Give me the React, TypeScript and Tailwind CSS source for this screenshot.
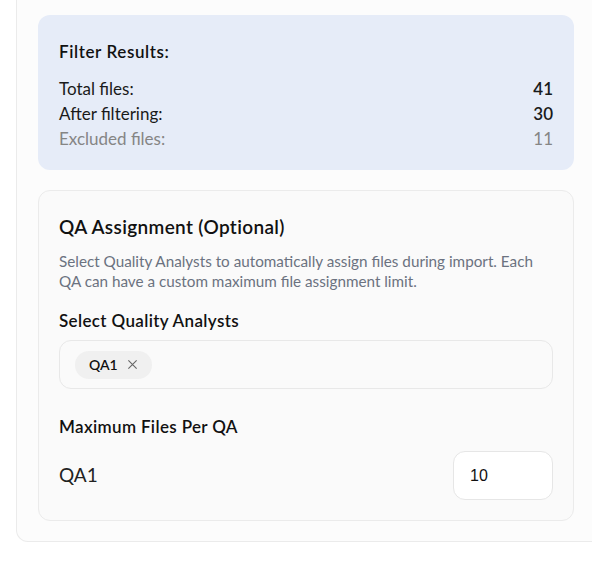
import React from "react";

export default function App() {
  return (
    <div className="min-h-[576px] bg-white pl-4 pr-0" style={{ fontFamily: "Lato, 'Noto Sans', sans-serif" }}>
      <div className="-mt-4 mr-[-12px] rounded-b-xl border border-t-0 border-[#ebebeb] bg-[#fcfcfc] pb-5 pl-[21px] pr-[29px] pt-[31px]">
        <div className="rounded-xl bg-[#e6ecf8] px-[21px] pb-[19px] pt-[25px]">
          <div className="text-[17px] font-semibold leading-6 tracking-[0.6px] text-[#111]">Filter Results:</div>
          <div className="mt-[12px] text-[17px] leading-[25px]">
            <div className="flex justify-between text-[#1a1a1a]">
              <span>Total files:</span>
              <span className="font-semibold">41</span>
            </div>
            <div className="flex justify-between text-[#1a1a1a]">
              <span>After filtering:</span>
              <span className="font-semibold">30</span>
            </div>
            <div className="flex justify-between text-[#858585]">
              <span>Excluded files:</span>
              <span>11</span>
            </div>
          </div>
        </div>

        <div className="mt-5 rounded-xl border border-[#ebebeb] bg-[#fafafa] px-5 pb-5 pt-[24px]">
          <div className="text-[19px] font-semibold leading-6 tracking-[0.35px] text-[#111]">QA Assignment (Optional)</div>
          <p className="mt-[12px] text-[15.25px] leading-5 text-[#6b7280]">
            Select Quality Analysts to automatically assign files during import. Each QA can have a custom maximum file assignment limit.
          </p>
          <div className="mt-[18px] text-[17px] font-semibold leading-6 tracking-[0.35px] text-[#111]">Select Quality Analysts</div>
          <div className="mt-[7px] flex h-[49px] items-center rounded-xl border border-[#e8e8e8] bg-[#fafafa] px-[15px]">
            <span className="flex h-[28px] items-center gap-[9px] rounded-full bg-[#f0f0f0] pl-[14px] pr-[14px] text-[14px] font-semibold text-[#111]">
              QA1
              <svg width="11" height="11" viewBox="0 0 12 12" className="text-[#666]">
                <path d="M1.5 1.5 L10.5 10.5 M10.5 1.5 L1.5 10.5" stroke="currentColor" strokeWidth="1.2" fill="none" />
              </svg>
            </span>
          </div>
          <div className="mt-[26px] text-[17px] font-semibold leading-6 tracking-[0.35px] text-[#111]">Maximum Files Per QA</div>
          <div className="mt-[12px] flex items-center justify-between">
            <span className="text-[19px] text-[#222]">QA1</span>
            <div
              className="flex h-[49px] w-[100px] items-center rounded-xl border border-[#e6e6e6] bg-white px-4 text-[16px] text-[#111]"
              style={{ fontFamily: "'Liberation Sans', Arial, sans-serif" }}
            >
              10
            </div>
          </div>
        </div>
      </div>
    </div>
  );
}
